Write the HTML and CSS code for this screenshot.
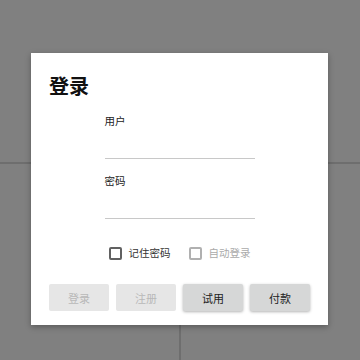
FILE: index.html
```html
<!DOCTYPE html>
<html lang="zh-CN">
<head>
  <meta charset="UTF-8">
  <meta name="viewport" content="width=device-width, initial-scale=1.0">
  <title>登录</title>
  <link rel="stylesheet" href="styles.css">
</head>
<body>
  <div class="backdrop">
    <div class="pane-top"></div>
    <div class="pane-bottom">
      <div class="pane-left"></div>
      <div class="pane-right"></div>
    </div>
  </div>

  <div class="dialog">
    <h1 class="dialog-title">登录</h1>
    <div class="fields">
      <div class="field">
        <label class="field-label" for="user">用户</label>
        <input id="user" class="field-input" type="text">
      </div>
      <div class="field">
        <label class="field-label" for="pass">密码</label>
        <input id="pass" class="field-input" type="password">
      </div>
      <div class="checks">
        <label class="check">
          <span class="box"></span>
          <span>记住密码</span>
        </label>
        <label class="check disabled">
          <span class="box"></span>
          <span>自动登录</span>
        </label>
      </div>
    </div>
    <div class="actions">
      <button class="btn" disabled>登录</button>
      <button class="btn" disabled>注册</button>
      <button class="btn">试用</button>
      <button class="btn">付款</button>
    </div>
  </div>
</body>
</html>
```

FILE: styles.css
```css
body {
  font-family: Roboto, "Noto Sans CJK SC", sans-serif;
  margin: 0;
  padding: 0;
  width: 360px;
  height: 360px;
  overflow: hidden;
  background-color: #808080;
}
.backdrop {
  display: flex;
  flex-direction: column;
  height: 360px;
}
.pane-top {
  height: 162px;
  border-bottom: 2px solid #6e6e6e;
}
.pane-bottom {
  flex: 1;
  display: flex;
}
.pane-left {
  width: 179px;
  border-right: 2px solid #6e6e6e;
}
.pane-right {
  flex: 1;
}

/* ダイアログ */
.dialog {
  position: absolute;
  left: 31px;
  top: 53px;
  width: 297px;
  height: 272px;
  box-sizing: border-box;
  padding: 22px 18px 0;
  background-color: #fff;
  box-shadow: 0 2px 6px rgba(0, 0, 0, 0.3);
}
.dialog-title {
  margin: 0;
  font-size: 20px;
  line-height: 24px;
  font-weight: bold;
  color: #111;
}
.fields {
  width: 150px;
  margin: 16px auto 0;
}
.field + .field {
  margin-top: 16px;
}
.field-label {
  display: block;
  font-size: 10.5px;
  line-height: 14px;
  color: #222;
}
.field-input {
  display: block;
  width: 100%;
  height: 30px;
  box-sizing: border-box;
  padding: 0;
  border: none;
  border-bottom: 1px solid #c8c8c8;
  outline: none;
  background: transparent;
}
.checks {
  display: flex;
  gap: 18px;
  margin-top: 28px;
  padding-left: 4px;
  width: 180px;
}
.check {
  display: flex;
  align-items: center;
  gap: 7px;
  font-size: 10.5px;
  line-height: 13px;
  color: #333;
  white-space: nowrap;
}
.box {
  width: 13px;
  height: 13px;
  box-sizing: border-box;
  border: 2px solid #616161;
  border-radius: 2px;
}
.check.disabled {
  color: #aaa;
}
.check.disabled .box {
  border-color: #b0b0b0;
}
.actions {
  display: grid;
  grid-template-columns: repeat(4, 1fr);
  gap: 7px;
  margin-top: 24px;
}
.btn {
  height: 27px;
  padding: 0;
  border: none;
  border-radius: 2px;
  font-family: inherit;
  font-size: 11px;
  color: #222;
  background-color: #d6d7d7;
  box-shadow: 0 1px 3px rgba(0, 0, 0, 0.3);
}
.btn:disabled {
  color: #b8b8b8;
  background-color: #e6e6e6;
  box-shadow: none;
}
```
